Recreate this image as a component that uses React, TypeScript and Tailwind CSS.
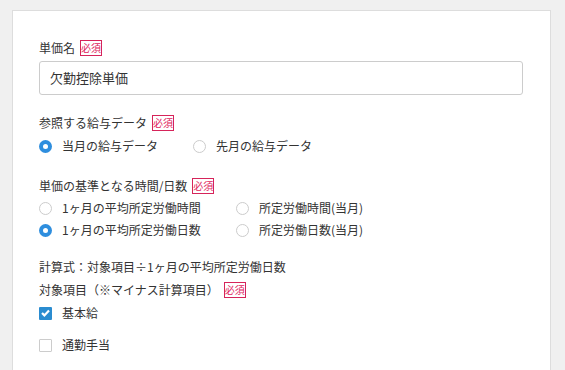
import React from 'react';

const font = { fontFamily: '"Noto Sans CJK JP", "Noto Sans", sans-serif' };

function Required() {
  return (
    <span className="ml-[5px] inline-flex h-[16px] w-[22px] items-center justify-center border border-[#d6245a] text-[10px] leading-none text-[#e0245e]">
      必須
    </span>
  );
}

function Radio({ checked, label }: { checked?: boolean; label: string }) {
  return (
    <label className="flex items-center gap-[10px]">
      {checked ? (
        <span className="flex h-[13px] w-[13px] items-center justify-center rounded-full bg-[#2e8ede]">
          <span className="h-[5px] w-[5px] rounded-full bg-white" />
        </span>
      ) : (
        <span className="h-[13px] w-[13px] rounded-full border border-[#cccccc] bg-white" />
      )}
      <span>{label}</span>
    </label>
  );
}

function Checkbox({ checked, label }: { checked?: boolean; label: string }) {
  return (
    <label className="flex items-center gap-[10px]">
      {checked ? (
        <span className="flex h-[13px] w-[13px] items-center justify-center rounded-[1px] bg-[#2a8cd0]">
          <svg width="9" height="8" viewBox="0 0 9 8">
            <path d="M1 4 L3.4 6.4 L8 1.5" fill="none" stroke="white" strokeWidth="2.2" />
          </svg>
        </span>
      ) : (
        <span className="h-[13px] w-[13px] rounded-[1px] border border-[#cccccc] bg-white" />
      )}
      <span>{label}</span>
    </label>
  );
}

export default function App() {
  return (
    <div className="h-[370px] w-[565px] overflow-hidden bg-[#f0f0f0] pl-[12px] pt-[10px]" style={font}>
      <div className="h-[400px] w-[539px] border border-[#dddddd] bg-white pl-[26px] pr-[27px] pt-[28px] text-[12px] text-[#333333]">
        {/* 単価名 */}
        <div className="flex h-[18px] items-center">
          <span>単価名</span>
          <Required />
        </div>
        <div className="mt-[4px] flex h-[34px] items-center rounded-[3px] border border-[#cccccc] px-[10px] text-[13px]">
          欠勤控除単価
        </div>

        {/* 参照する給与データ */}
        <div className="mt-[19px] flex h-[18px] items-center">
          <span>参照する給与データ</span>
          <Required />
        </div>
        <div className="mt-[4px] flex h-[20px] items-center gap-[35px]">
          <Radio checked label="当月の給与データ" />
          <Radio label="先月の給与データ" />
        </div>

        {/* 時間/日数 */}
        <div className="mt-[21px] flex h-[18px] items-center">
          <span>単価の基準となる時間/日数</span>
          <Required />
        </div>
        <div className="mt-[3px] grid grid-cols-[197px_1fr] gap-y-[2px]">
          <div className="flex h-[20px] items-center"><Radio label="1ヶ月の平均所定労働時間" /></div>
          <div className="flex h-[20px] items-center"><Radio label="所定労働時間(当月)" /></div>
          <div className="flex h-[20px] items-center"><Radio checked label="1ヶ月の平均所定労働日数" /></div>
          <div className="flex h-[20px] items-center"><Radio label="所定労働日数(当月)" /></div>
        </div>

        {/* 計算式 */}
        <div className="mt-[18px] flex h-[18px] items-center">計算式：対象項目÷1ヶ月の平均所定労働日数</div>
        <div className="mt-[5px] flex h-[18px] items-center">
          <span>対象項目（※マイナス計算項目）</span>
          <Required />
        </div>
        <div className="mt-[4px] flex h-[20px] items-center">
          <Checkbox checked label="基本給" />
        </div>
        <div className="mt-[12px] flex h-[20px] items-center">
          <Checkbox label="通勤手当" />
        </div>
      </div>
    </div>
  );
}
